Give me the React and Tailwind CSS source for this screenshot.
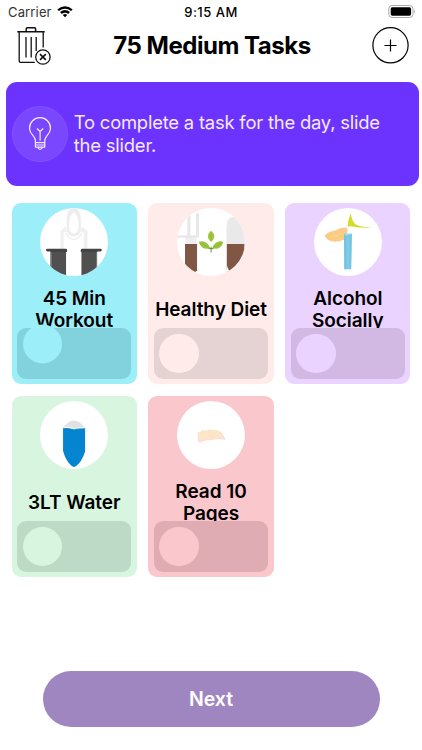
import React from "react";

const fontStack = "font-['Inter','Liberation_Sans',sans-serif]";

function StatusBar() {
  return (
    <div className="grid h-6 grid-cols-3 items-center pl-2 pr-[6px] text-[13px] leading-4">
      <div className="flex items-center gap-[5px]">
        <span className="text-[13px] tracking-[0.15px] text-[#333]">Carrier</span>
        <svg className="h-3 w-4" viewBox="0 0 16 12">
          <path d="M0.3 3.4Q8-3 15.7 3.4L14 5.1Q8 0.3 2 5.1Z" />
          <path d="M3 6.1Q8 2 13 6.1L11.2 7.9Q8 5.4 4.8 7.9Z" />
          <path d="M5.8 8.9Q8 7.2 10.2 8.9L8 11.3Z" />
        </svg>
      </div>
      <span className="-ml-[2px] whitespace-nowrap text-center font-medium tracking-[0.5px] text-black">9:15 AM</span>
      <svg className="h-[14px] w-[28px] justify-self-end" viewBox="0 0 28 14">
        <rect x="0.8" y="0.5" width="24.2" height="12" rx="3.4" fill="none" stroke="#aaa" />
        <rect x="2.7" y="2.3" width="20.4" height="8.4" rx="1.6" />
        <path d="M26 4.5Q27.8 6.5 26 8.5Z" fill="#aaa" />
      </svg>
    </div>
  );
}

function TrashIcon() {
  return (
    <svg className="h-[41px] w-[36px]" viewBox="0 0 36 41" fill="none" stroke="#111" strokeWidth="1.3">
      <path d="M1.3 7.8H28.7M10.2 7.5V4.9Q10.2 3.8 11.3 3.8H18.5Q19.6 3.8 19.6 4.9V7.5" strokeWidth="1.5" />
      <path d="M3.2 8V37Q3.2 38.4 4.6 38.4H18.8M27.2 8V23.5" />
      <path d="M10 13V33.5M15.2 13V33.5M20.2 13V27" />
      <circle cx="26.9" cy="33" r="7.2" />
      <path d="M24 30.1L29.8 35.9M29.8 30.1L24 35.9" strokeWidth="1.6" />
    </svg>
  );
}

function Header() {
  return (
    <header className="flex h-[58px] items-start justify-between pl-4 pr-[13px]">
      <TrashIcon />
      <h1 className="mt-[5px] whitespace-nowrap text-[24px] font-bold leading-[34px] tracking-[-0.48px]">
        75 Medium Tasks
      </h1>
      <svg className="mt-[3px] h-[37px] w-[37px]" viewBox="0 0 37 37" fill="none" stroke="#000">
        <circle cx="18.5" cy="18.3" r="17.6" strokeWidth="1.2" />
        <path d="M12.5 18.5H24.5M18.5 12.5V24.5" strokeWidth="1.2" />
      </svg>
    </header>
  );
}

function Tip() {
  return (
    <section className="ml-[5.8px] flex h-[103.7px] w-[413.7px] items-center gap-[6px] rounded-[11px] bg-[#6c33ff] pl-[6px]">
      <div className="flex h-14 w-14 shrink-0 items-center justify-center rounded-full border border-[#8451ff] bg-[#7a47fe]">
        <svg className="h-9 w-6" viewBox="0 0 24 36" fill="none" stroke="#f5e9ff" strokeWidth="1.2" strokeLinejoin="round">
          <path d="M7.4 26.6V24.4C7.4 20 1.5 18.5 1.5 12.2A10.5 10.5 0 0 1 22.5 12.2C22.5 18.5 16.8 20 16.8 24.4V26.6Z" />
          <path d="M7.4 27V31.2H16.8V27M7.4 29H16.8M9.7 31.5Q12 35.2 14.5 31.5" />
          <path d="M12.1 24.8V15.5L9 12.5M12.1 15.5L15.2 12.5" />
        </svg>
      </div>
      <p className="w-[330px] text-[18.4px] leading-[22.6px] tracking-[-0.2px] text-[#f5e9ff]">
        To complete a task for the day, slide the slider.
      </p>
    </section>
  );
}

const artClass = "h-full w-full";

function WorkoutArt() {
  return (
    <svg className={artClass} viewBox="107 39 202 202">
      <path d="M168 162V108L183 94L187 110L178 112V162ZM249 162V108L232 94L228 110L238 112V162Z" fill="#f0f0f0" />
      <path d="M187 108V72Q190 38 208 38Q226 38 229 72V108Q225 124 208 124Q191 124 187 108Z" fill="#ededed" />
      <path d="M193 95Q194 60 208 52Q222 60 223 95Q221 115 208 115Q195 115 193 95Z" fill="#fff" />
      <path d="M184 113Q192 133 208 133Q224 133 232 113" fill="none" stroke="#ededed" strokeWidth="3" />
      <path d="M138 169H185V241H138ZM231 169H278V241H231Z" fill="#505050" />
      <path d="M129 161H184Q188 161 188 165V171H140L137 169H129Q125 169 125 165T129 161ZM233 161H288Q292 161 292 165T288 169H280L277 171H229V165Q229 161 233 161Z" fill="#444" />
      <path d="M141 172V241M276 172V241" stroke="#8a8a8a" strokeWidth="2" />
    </svg>
  );
}

function DietArt() {
  return (
    <svg className={artClass} viewBox="105 39 202 202">
      <path d="M105 121H171V127H162V148H131V127H105Z" fill="#e5e5e5" />
      <path d="M136 39H145V121H136ZM162 55H171V122H162Z" fill="#e7e7e7" />
      <path d="M131 127H163V148H131Z" fill="#efefef" />
      <path d="M253 148V95Q254 65 274 65H308V148Z" fill="#e9e9e9" />
      <path d="M129 147H165V225L158 233H140L129 216Z" fill="#805744" />
      <path d="M254 147H307V241H254Z" fill="#805744" />
      <path d="M255 212Q258 228 269 231L260 241H250Z" fill="#fff" />
      <path d="M207 172V155M207 162Q218 160 226 150M207 162Q197 161 188 150" stroke="#63923b" strokeWidth="3" fill="none" />
      <path d="M207 107Q186 123 207 141Q228 123 207 107Z" fill="#a1c83b" />
      <path d="M170 140Q194 133 204 158Q179 168 170 140ZM244 140Q220 133 211 158Q235 168 244 140Z" fill="#9bc43a" />
      <path d="M207 112V139M174 143L201 157M240 143L213 157" stroke="#7fb23c" strokeWidth="1.5" />
    </svg>
  );
}

function DrinkArt() {
  return (
    <svg className={artClass} viewBox="103 39 202 202">
      <path d="M204 92Q203 82 209 66L214 55Q215 80 229 89Q242 96 277 97Q249 99 225 96Q210 92 204 95Z" fill="#d3dc2d" />
      <path d="M134 123Q143 109 166 106Q180 97 192 98H202Q206 110 198 122L193 134Q166 145 145 135Z" fill="#fccb8b" />
      <path d="M142 123Q154 112 180 115L191 126Q164 135 146 129Z" fill="#f8cd70" />
      <path d="M148 126L172 116M154 129L183 117M162 117L183 129" stroke="#fbdba2" strokeWidth="2" />
      <path d="M193 116H216L214 222H194Z" fill="#80cce6" />
      <path d="M193 119L198 123L216 116L214 222H209V123L200 126V222H194Z" fill="#72c3e0" />
      <path d="M194 116H216L200 123Z" fill="#9ddbea" />
    </svg>
  );
}

function WaterArt() {
  return (
    <svg className={artClass} viewBox="107 33 202 202">
      <path d="M175 112L191 97Q208 85 226 97L242 112V119H175Z" fill="#e2e2e2" />
      <path d="M176 113Q192 112 208 117Q226 113 242 113V184Q232 216 214 228Q208 233 201 227Q184 212 176 183Z" fill="#0585cf" />
      <path d="M176 113Q193 111 208 116Q225 113 242 113" fill="none" stroke="#fff" strokeWidth="3" />
      <path d="M207 118L224 116" stroke="#55a8d7" strokeWidth="2" />
    </svg>
  );
}

function BookArt() {
  return (
    <svg className={artClass} viewBox="105 33 202 202">
      <path d="M168 127L172 155Q190 147 209 147Q229 142 248 146L234 124L226 120L204 118L196 121L178 121L176 125Z" fill="#fde5c8" />
      <path d="M168 127L170 156Q189 148 209 148Q229 143 249 147L235 126" fill="none" stroke="#fac8ca" strokeWidth="2" />
      <path d="M176 127Q190 121 204 124L211 145" fill="none" stroke="#fcddbd" strokeWidth="1.5" />
    </svg>
  );
}

const tasks = [
  { title: "45 Min Workout", art: <WorkoutArt />, card: "bg-[#9ceef8]", track: "bg-[#82d2de]", knob: "bg-[#9ceef8] -translate-y-[9.5px]", text: "w-[85px]" },
  { title: "Healthy Diet", art: <DietArt />, card: "bg-[#ffecea]", track: "bg-[#e5d2d2]", knob: "bg-[#ffecea]", text: "whitespace-nowrap" },
  { title: "Alcohol Socially", art: <DrinkArt />, card: "bg-[#ebd3ff]", track: "bg-[#d1b9e4]", knob: "bg-[#ebd3ff]", text: "w-[85px]" },
  { title: "3LT Water", art: <WaterArt />, card: "bg-[#d8f5e0]", track: "bg-[#bddac6]", knob: "bg-[#d8f5e0]", text: "whitespace-nowrap" },
  { title: "Read 10 Pages", art: <BookArt />, card: "bg-[#fac7cd]", track: "bg-[#e0acb3]", knob: "bg-[#fac7cd]", text: "w-[85px]" },
];

function TaskCard({ task }) {
  return (
    <article className={`flex h-[181.5px] flex-col items-center rounded-[9px] p-[5.5px] ${task.card}`}>
      <div className="h-[67.5px] w-[67.5px] shrink-0 overflow-hidden rounded-full bg-white">{task.art}</div>
      <div className="mt-[9.5px] flex h-[43px] w-full shrink-0 items-center justify-center overflow-hidden pt-[7.5px]">
        <h2 className={`text-center text-[19px] font-semibold leading-[22.5px] tracking-[-0.05px] ${task.text}`}>
          {task.title}
        </h2>
      </div>
      <div className={`flex h-[50.5px] w-full shrink-0 items-center rounded-[9px] pl-[5.5px] ${task.track}`}>
        <div className={`h-[39.5px] w-[39.5px] rounded-full ${task.knob}`} />
      </div>
    </article>
  );
}

export default function App() {
  return (
    <main className={`flex h-[750px] w-[422px] flex-col overflow-hidden bg-white text-black ${fontStack}`}>
      <StatusBar />
      <Header />
      <Tip />
      <section className="mt-[17px] grid grid-cols-[repeat(3,125.3px)] gap-[11.5px] pl-[11.6px]">
        {tasks.map((task) => <TaskCard key={task.title} task={task} />)}
      </section>
      <button className="mx-auto mb-[23px] mt-auto h-14 w-[337px] rounded-full bg-[#9f86c0] pt-[2px] text-[19.5px] font-semibold text-white">
        Next
      </button>
    </main>
  );
}
